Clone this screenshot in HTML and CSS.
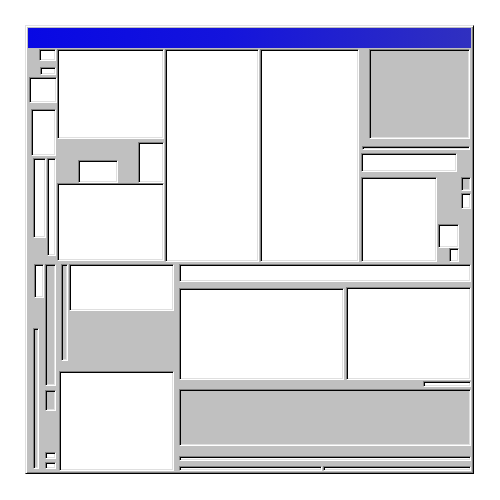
FILE: index.html
```html
<!DOCTYPE html>
<html>
<head>
<meta charset="utf-8">
<link rel="stylesheet" href="styles.css">
</head>
<body>
<div class="win">
  <div class="title"></div>
  <div class="content">
    <div class="top">
      <div class="tl col">
        <div class="sk w tl-a"></div>
        <div class="sk w tl-b"></div>
        <div class="sk w tl-c"></div>
        <div class="sk w tl-d"></div>
        <div class="tl-ef">
          <div class="sk w tl-e"></div>
          <div class="sk w tl-f"></div>
        </div>
      </div>
      <div class="c1 col">
        <div class="sk w c1-a"></div>
        <div class="c1-mid">
          <div class="sk w c1-b"></div>
          <div class="sk w c1-c"></div>
        </div>
        <div class="sk w c1-d"></div>
      </div>
      <div class="sk w c2"></div>
      <div class="sk w c3"></div>
      <div class="rt col">
        <div class="sk g rt-a"></div>
        <div class="sk g rt-b"></div>
        <div class="sk w rt-c"></div>
        <div class="rt-low">
          <div class="sk w rt-d"></div>
          <div class="rt-mini col">
            <div class="sk w rt-g"></div>
            <div class="sk w rt-h"></div>
          </div>
          <div class="rt-side col">
            <div class="sk g rt-e"></div>
            <div class="sk w rt-f"></div>
          </div>
        </div>
      </div>
    </div>
    <div class="bottom">
      <div class="bl">
        <div class="bl-strip">
          <div class="bl-ca col">
            <div class="sk w bl-g"></div>
            <div class="sk g bl-j"></div>
          </div>
          <div class="bl-cb col">
            <div class="sk g bl-h"></div>
            <div class="sk g bl-i"></div>
            <div class="sk w bl-s1"></div>
            <div class="sk w bl-s2"></div>
          </div>
        </div>
        <div class="bl-main col">
          <div class="bl-upper">
            <div class="sk g bl-k"></div>
            <div class="sk w bl-w1"></div>
          </div>
          <div class="sk w bl-w2"></div>
        </div>
      </div>
      <div class="br col">
        <div class="sk w br-bar1"></div>
        <div class="br-row">
          <div class="sk w br-b1"></div>
          <div class="sk w br-b2"></div>
        </div>
        <div class="sk w br-bar2"></div>
        <div class="sk g br-big"></div>
        <div class="sk w br-bar3"></div>
        <div class="br-foot">
          <div class="sk w br-f1"></div>
          <div class="sk w br-f2"></div>
        </div>
      </div>
    </div>
  </div>
</div>
</body>
</html>
```
FILE: styles.css
```css
html, body { margin: 0; padding: 0; background: #ffffff; }
* { box-sizing: border-box; }

.win {
  margin: 25px 0 0 25px;
  width: 449px;
  height: 449px;
  background: #c0c0c0;
  border: 1px solid;
  border-color: #dfdfdf #000000 #000000 #dfdfdf;
  box-shadow: inset 1px 1px #ffffff, inset -1px -1px #808080;
  padding: 2px;
  display: flex;
  flex-direction: column;
}
.title {
  height: 20px;
  flex: none;
  background: linear-gradient(to right, #0808e4 0%, #1414dc 45%, #3030c0 100%);
}
.content {
  flex: 1;
  display: flex;
  flex-direction: column;
}
.col { display: flex; flex-direction: column; align-items: flex-start; }

.sk {
  border: 1px solid;
  border-color: #808080 #ffffff #ffffff #808080;
  box-shadow: inset 1px 1px #000000, inset -1px -1px #dfdfdf;
  flex: none;
}
.w { background: #ffffff; }
.g { background: #c0c0c0; }

/* top half */
.top { height: 215px; display: flex; flex: none; }
.tl { width: 29px; flex: none; }
.tl-a { margin: 1px 0 0 11px; width: 17px; height: 12px; }
.tl-b { margin: 6px 0 0 12px; width: 16px; height: 8px; }
.tl-c { margin: 2px 0 0 1px; width: 28px; height: 26px; }
.tl-d { margin: 6px 0 0 3px; width: 25px; height: 47px; }
.tl-ef { display: flex; margin: 2px 0 0 5px; align-items: flex-start; }
.tl-e { width: 13px; height: 80px; }
.tl-f { margin-left: 1px; width: 9px; height: 98px; }

.c1 { width: 107px; flex: none; }
.c1-a { margin-top: 1px; width: 107px; height: 90px; }
.c1-mid { height: 44px; display: flex; align-items: flex-end; }
.c1-b { margin-left: 21px; width: 40px; height: 23px; }
.c1-c { margin-left: 20px; width: 26px; height: 41px; }
.c1-d { width: 107px; height: 78px; }

.c2 { margin: 1px 0 0 1px; width: 94px; height: 213px; }
.c3 { margin: 1px 0 0 1px; width: 99px; height: 213px; }

.rt { width: 111px; margin-left: 1px; flex: none; }
.rt-a { margin: 1px 0 0 9px; width: 101px; height: 90px; }
.rt-b { margin: 7px 0 0 2px; width: 108px; height: 4px; }
.rt-c { margin: 3px 0 0 1px; width: 96px; height: 19px; }
.rt-low { margin-top: 5px; height: 85px; display: flex; align-items: stretch; }
.rt-d { margin-left: 1px; width: 76px; height: 85px; }
.rt-mini { margin-left: 1px; justify-content: flex-end; }
.rt-g { width: 21px; height: 24px; }
.rt-h { margin-left: 11px; width: 10px; height: 14px; }
.rt-side { margin-left: 2px; }
.rt-e { width: 10px; height: 14px; }
.rt-f { margin-top: 2px; width: 10px; height: 16px; }

/* bottom half */
.bottom { flex: 1; display: flex; }
.bl { width: 146px; flex: none; display: flex; }
.bl-strip { width: 29px; flex: none; display: flex; }
.bl-ca { margin-left: 5px; width: 11px; }
.bl-g { margin: 1px 0 0 1px; width: 10px; height: 34px; }
.bl-j { margin-top: 30px; width: 6px; height: 141px; }
.bl-cb { margin-left: 1px; width: 11px; }
.bl-h { margin-top: 1px; width: 11px; height: 122px; }
.bl-i { margin-top: 4px; width: 11px; height: 21px; }
.bl-s1 { margin-top: 41px; width: 11px; height: 7px; }
.bl-s2 { margin-top: 3px; width: 11px; height: 7px; }

.bl-main { width: 117px; flex: none; }
.bl-upper { height: 108px; display: flex; align-items: flex-start; }
.bl-k { margin: 1px 0 0 4px; width: 7px; height: 97px; }
.bl-w1 { margin: 1px 0 0 1px; width: 105px; height: 47px; }
.bl-w2 { margin-left: 2px; width: 115px; height: 100px; }

.br { margin-left: 5px; width: 292px; flex: none; }
.br-bar1 { margin-top: 1px; width: 292px; height: 18px; }
.br-row { margin-top: 5px; display: flex; align-items: flex-start; }
.br-b1 { margin-top: 1px; width: 165px; height: 92px; }
.br-b2 { margin-left: 2px; width: 125px; height: 93px; }
.br-bar2 { margin: 1px 0 0 244px; width: 48px; height: 6px; }
.br-big { margin-top: 2px; width: 292px; height: 57px; }
.br-bar3 { margin-top: 10px; width: 292px; height: 5px; }
.br-foot { margin-top: 5px; display: flex; }
.br-f1 { width: 143px; height: 5px; }
.br-f2 { margin-left: 1px; width: 148px; height: 5px; }
```
